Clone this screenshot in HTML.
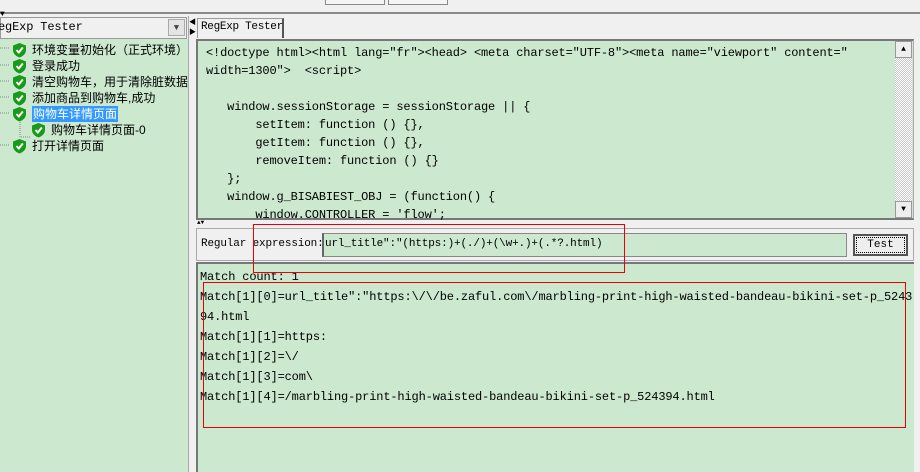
<!DOCTYPE html>
<html><head><meta charset="utf-8"><style>
*{margin:0;padding:0;box-sizing:border-box}
body{width:920px;height:472px;overflow:hidden;background:#f0f0f0;position:relative;font-family:"Liberation Mono","Noto Sans CJK SC",monospace;font-size:12px;color:#000}
.a{position:absolute}
.g{background:#cce8cf}
.mono{font-family:"Liberation Mono","Noto Sans CJK SC",monospace;font-size:12px;white-space:pre;letter-spacing:-0.15px}
.tree div{position:absolute;left:0;height:16px;font-family:"Liberation Sans","Noto Sans CJK SC",sans-serif;font-size:12px;white-space:nowrap;line-height:16px}
</style></head><body>
<div class="a" style="left:0;top:0;width:920px;height:14px;background:#f0f0f0;border-bottom:2px solid #888"></div>
<div class="a" style="left:325px;top:0;width:60px;height:5px;border:1px solid #888;border-top:none;background:#f4f4f4"></div>
<div class="a" style="left:388px;top:0;width:60px;height:5px;border:1px solid #888;border-top:none;background:#f4f4f4"></div>
<div class="a" style="left:0;top:10px;font-size:8px">▼</div>
<div class="a" style="left:0;top:17px;width:187px;height:22px;background:#f0f0f0;border:1px solid #999"></div>
<div class="a mono" style="left:-2px;top:20px;font-size:12px">egExp Tester</div>
<div class="a" style="left:168px;top:19px;width:17px;height:17px;background:#e4e4e4;border:1px solid #aaa;font-size:9px;text-align:center;line-height:16px;color:#444">▼</div>
<div class="a g" style="left:0;top:39px;width:188px;height:433px"></div>
<div class="tree">
<svg class="a" style="left:0;top:40px" width="30" height="120"><g stroke="#888" stroke-dasharray="1 1" fill="none"><path d="M0 8H10M0 25H10M0 41H10M0 57H10M0 73H10M0 105H10M20 80V97H32"/></g></svg>
<div style="left:32px;top:42px">环境变量初始化（正式环境）</div>
<div style="left:32px;top:58px">登录成功</div>
<div style="left:32px;top:74px">清空购物车，用于清除脏数据</div>
<div style="left:32px;top:90px">添加商品到购物车,成功</div>
<div style="left:32px;top:106px;background:#3399ff;color:#fff;padding:0 1px">购物车详情页面</div>
<div style="left:51px;top:122px">购物车详情页面-0</div>
<div style="left:32px;top:138px">打开详情页面</div>
</div>
<svg class="a" style="left:0;top:0" width="60" height="160"><defs><g id="s"><path d="M6.5 0L13 2.5V7C13 11 9.5 13.5 6.5 14.5 3.5 13.5 0 11 0 7V2.5Z" fill="#1a9a1a"/><path d="M3.5 7L5.8 9.5 9.8 4.5" stroke="#fff" stroke-width="2" fill="none"/></g></defs>
<use href="#s" x="13" y="43"/><use href="#s" x="13" y="59"/><use href="#s" x="13" y="75"/><use href="#s" x="13" y="91"/><use href="#s" x="13" y="107"/><use href="#s" x="32" y="123"/><use href="#s" x="13" y="139"/></svg>
<div class="a" style="left:188px;top:16px;width:8px;height:456px;background:#f0f0f0;border-left:1px solid #aaa"></div>
<div class="a" style="left:189px;top:17px;font-size:7px">◀<br>▶</div>
<div class="a" style="left:197px;top:18px;width:87px;height:20px;background:#f0f0f0;border:1px solid #999;border-bottom:none;border-right:2px solid #555"></div>
<div class="a mono" style="left:201px;top:21px;font-size:11px;letter-spacing:-0.3px">RegExp Tester</div>
<div class="a g" style="left:196px;top:39px;width:718px;height:181px;border:2px solid #777;border-right:1px solid #aaa"></div>
<div class="a mono" style="left:206px;top:44px;line-height:18px">&lt;!doctype html&gt;&lt;html lang="fr"&gt;&lt;head&gt; &lt;meta charset="UTF-8"&gt;&lt;meta name="viewport" content="
width=1300"&gt;  &lt;script&gt;

   window.sessionStorage = sessionStorage || {
       setItem: function () {},
       getItem: function () {},
       removeItem: function () {}
   };
   window.g_BISABIEST_OBJ = (function() {
       window.CONTROLLER = 'flow';</div>
<div class="a" style="left:895px;top:41px;width:17px;height:177px;background:repeating-conic-gradient(#c8c8c8 0 25%,#fff 0 50%) 0 0/2px 2px"></div>
<div class="a" style="left:895px;top:41px;width:17px;height:17px;background:#eee;border:1px solid #999;font-size:8px;text-align:center;line-height:15px">▲</div>
<div class="a" style="left:895px;top:201px;width:17px;height:17px;background:#eee;border:1px solid #999;font-size:8px;text-align:center;line-height:15px">▼</div>
<div class="a" style="left:197px;top:220px;font-size:6px;line-height:6px">▲▼</div>
<div class="a" style="left:196px;top:228px;width:718px;height:33px;border:1px solid #aaa;background:#f0f0f0"></div>
<div class="a mono" style="left:201px;top:238px;font-size:11px">Regular expression:</div>
<div class="a g" style="left:322px;top:233px;width:525px;height:24px;border:1px solid #888;border-left:2px solid #666"></div>
<div class="a mono" style="left:325px;top:238px;font-size:11px">url_title":"(https:)+(./)+(\w+.)+(.*?.html)</div>
<div class="a" style="left:853px;top:234px;width:55px;height:22px;background:#eee;border:2px solid #555;outline:1px dotted #000;outline-offset:-4px;text-align:center;line-height:18px;font-size:11px">Test</div>
<div class="a g" style="left:196px;top:262px;width:718px;height:210px;border-left:2px solid #777;border-top:2px solid #777"></div>
<div class="a mono" style="left:200px;top:267px;line-height:20px">Match count: 1
Match[1][0]=url_title":"https:\/\/be.zaful.com\/marbling-print-high-waisted-bandeau-bikini-set-p_5243
94.html
Match[1][1]=https:
Match[1][2]=\/
Match[1][3]=com\
Match[1][4]=/marbling-print-high-waisted-bandeau-bikini-set-p_524394.html</div>
<div class="a" style="left:253px;top:224px;width:372px;height:49px;border:1px solid #e00"></div>
<div class="a" style="left:203px;top:282px;width:703px;height:146px;border:1px solid #e00"></div>
</body></html>
